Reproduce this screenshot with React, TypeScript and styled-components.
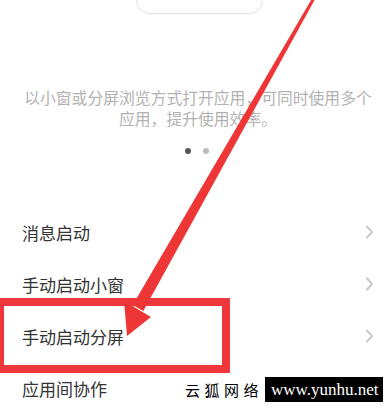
import React from 'react';
import styled, { createGlobalStyle } from 'styled-components';

const GlobalStyle = createGlobalStyle`
  html, body {
    margin: 0;
    padding: 0;
    background: #ffffff;
  }
  body {
    font-family: "Noto Sans CJK SC", "Noto Sans", sans-serif;
  }
`;

const items = ['消息启动', '手动启动小窗', '手动启动分屏', '应用间协作'];

function Chevron() {
  return (
    <svg width="9" height="14" viewBox="0 0 9 14" fill="none">
      <path d="M2 1.5 L7 7 L2 12.5" stroke="#c9c9c9" strokeWidth="2" strokeLinecap="round" strokeLinejoin="round" />
    </svg>
  );
}

function App() {
  return (
    <Page>
      <GlobalStyle />
      <PreviewCard />
      <Description>
        以小窗或分屏浏览方式打开应用，可同时使用多个
        <br />
        应用，提升使用效率。
      </Description>
      <Dots>
        <Dot $active />
        <Dot />
      </Dots>
      <Divider />
      <List>
        {items.map((label) => (
          <Row key={label}>
            <RowLabel>{label}</RowLabel>
            <Chevron />
          </Row>
        ))}
      </List>

      <Highlight />
      <ArrowLayer width="386" height="413" viewBox="0 0 386 413">
        <polygon points="312.7,-2.7 315.3,-1.3 143.3,310.9 132.7,305.1" fill="#ee3636" />
        <polygon points="124,301 151,317 127,336" fill="#ee3636" />
      </ArrowLayer>

      <Watermark>
        <WatermarkName>云狐网络</WatermarkName>
        <WatermarkUrl>www.yunhu.net</WatermarkUrl>
      </Watermark>
    </Page>
  );
}

export default App;

const Page = styled.div`
  position: relative;
  width: 386px;
  height: 413px;
  overflow: hidden;
  background: #ffffff;
  display: flex;
  flex-direction: column;
`;

const PreviewCard = styled.div`
  flex-shrink: 0;
  width: 125px;
  height: 60px;
  margin: -48px 0 0 136px;
  border: 1.5px solid #e4e4e4;
  border-radius: 14px;
  box-shadow: 0 1px 2px rgba(0, 0, 0, 0.04);
`;

const Description = styled.p`
  margin: 73px 0 0;
  padding-left: 10px;
  font-size: 15.8px;
  line-height: 21px;
  color: #b2b2b2;
  text-align: center;
  white-space: nowrap;
`;

const Dots = styled.div`
  display: flex;
  justify-content: center;
  gap: 12px;
  margin: 19px 0 0 8px;
`;

const Dot = styled.span<{ $active?: boolean }>`
  width: 6px;
  height: 6px;
  border-radius: 50%;
  background: ${({ $active }) => ($active ? '#555555' : '#bdbdbd')};
`;

const Divider = styled.div`
  height: 1px;
  margin: 26px 19px 0 22px;
  background: #efefef;
`;

const List = styled.div`
  display: flex;
  flex-direction: column;
  margin-top: 26px;
`;

const Row = styled.div`
  display: flex;
  align-items: center;
  justify-content: space-between;
  height: 52px;
  padding: 0 12px 0 22px;
`;

const RowLabel = styled.span`
  font-size: 17px;
  color: #333333;
`;

const Highlight = styled.div`
  position: absolute;
  left: -4px;
  top: 298px;
  width: 234px;
  height: 75px;
  box-sizing: border-box;
  border: 8px solid #f0383c;
`;

const ArrowLayer = styled.svg`
  position: absolute;
  left: 0;
  top: 0;
  pointer-events: none;
`;

const Watermark = styled.div`
  position: absolute;
  left: 185px;
  top: 377px;
  display: flex;
  align-items: center;
  gap: 2px;
  white-space: nowrap;
`;

const WatermarkName = styled.span`
  flex-shrink: 0;
  font-family: "Noto Sans CJK SC", serif;
  font-weight: 400;
  font-size: 15px;
  letter-spacing: 4.5px;
  color: #000000;
`;

const WatermarkUrl = styled.span`
  flex-shrink: 0;
  display: flex;
  align-items: center;
  height: 25px;
  width: 118px;
  padding-left: 6px;
  box-sizing: border-box;
  background: #000000;
  color: #ffffff;
  font-family: "Liberation Serif", serif;
  font-size: 17px;
`;
